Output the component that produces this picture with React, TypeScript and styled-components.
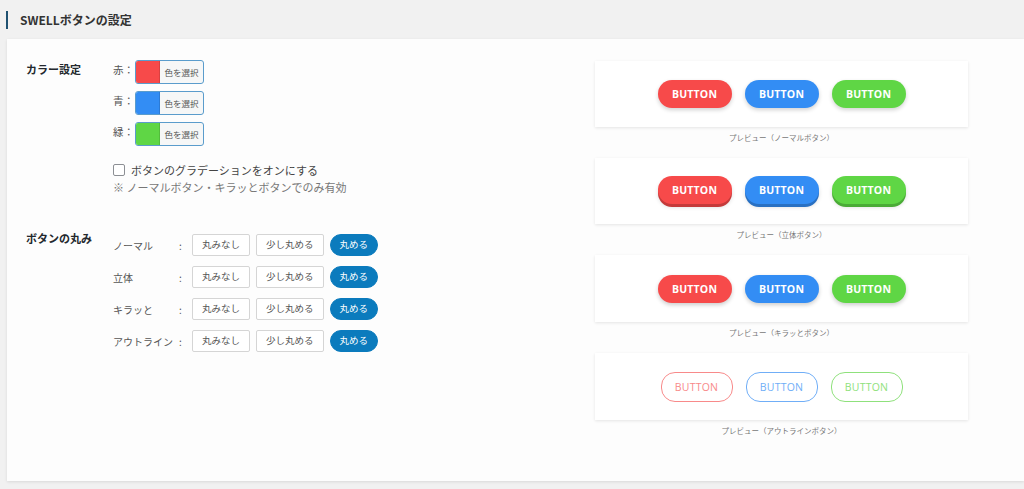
import React, { useState } from "react";
import styled, { createGlobalStyle, css } from "styled-components";

const GlobalStyle = createGlobalStyle`
    html, body {
        margin: 0;
        padding: 0;
        background: #f1f1f1;
        font-family: "Noto Sans CJK JP", "Noto Sans", sans-serif;
        color: #444;
    }
    * { box-sizing: border-box; }
`

const Page = styled.div`
    width: 1024px;
    height: 489px;
    overflow: hidden;
    display: flex;
    flex-direction: column;
`

const TitleBar = styled.div`
    height: 39px;
    display: flex;
    align-items: center;
    padding-left: 6px;
`

const TitleText = styled.h2`
    margin: 0;
    height: 18px;
    display: flex;
    align-items: center;
    border-left: 2px solid #1f5171;
    padding-left: 12px;
    font-size: 12px;
    font-weight: 700;
    color: #333;
    line-height: 1;
`

const Panel = styled.div`
    margin-left: 7px;
    height: 442px;
    background: #fdfdfd;
    box-shadow: 0 1px 3px rgba(0, 0, 0, 0.1);
    display: flex;
    padding: 22px 0 0 19px;
`

const LeftCol = styled.div`
    width: 569px;
    display: flex;
    flex-direction: column;
    gap: 35px;
    margin-top: -1px;
`

const Section = styled.div`
    display: grid;
    grid-template-columns: 87px 1fr;
    align-items: start;
`

const SectionTitle = styled.div`
    font-size: 11px;
    font-weight: 700;
    color: #23282d;
    line-height: 16px;
    padding-top: ${p => p.$offset}px;
`

const ColorList = styled.div`
    display: flex;
    flex-direction: column;
    gap: 7px;
`

const ColorRow = styled.div`
    display: flex;
    align-items: center;
    height: 24px;
`

const ColorLabel = styled.span`
    width: 22px;
    font-size: 10.5px;
    color: #555;
    margin-top: -6px;
`

const Picker = styled.button`
    display: flex;
    padding: 0;
    height: 24px;
    width: 69px;
    border: 1px solid #5a9ccc;
    border-radius: 3px;
    overflow: hidden;
    background: #f6f7f7;
    cursor: pointer;
    font-family: inherit;
`

const Swatch = styled.span`
    width: 24px;
    height: 100%;
    background: ${p => p.$color};
    border-right: 1px solid rgba(0, 0, 0, 0.12);
`

const PickerText = styled.span`
    flex: 1;
    display: flex;
    align-items: center;
    justify-content: center;
    font-size: 8.5px;
    color: #555;
`

const CheckRow = styled.label`
    display: flex;
    align-items: center;
    gap: 6px;
    margin-top: 16px;
    font-size: 11px;
    color: #444;
    line-height: 16px;
`

const CheckBox = styled.span`
    width: 12px;
    height: 12px;
    border: 1px solid #8c8f94;
    border-radius: 2px;
    background: #fff;
`

const Note = styled.div`
    font-size: 11px;
    color: #777;
    line-height: 16px;
    margin-top: 1px;
`

const RadiusList = styled.div`
    display: flex;
    flex-direction: column;
    gap: 10px;
    padding-top: 4px;
`

const RadiusRow = styled.div`
    display: flex;
    align-items: center;
    height: 22px;
`

const RowLabel = styled.span`
    width: 66px;
    font-size: 10px;
    color: #555;
`

const Colon = styled.span`
    width: 13px;
    font-size: 10px;
    color: #555;
`

const Options = styled.div`
    display: flex;
    gap: 6px;
`

const OptionBtn = styled.button`
    height: 22px;
    padding: 0 9px;
    font-family: inherit;
    font-size: 9.5px;
    line-height: 1;
    color: #555;
    background: #fff;
    border: 1px solid #d5d5d5;
    border-radius: 2px;
    cursor: pointer;
    ${p => p.$active && css`
        background: #0b7bbd;
        border-color: #0b7bbd;
        color: #fff;
        border-radius: 11px;
    `}
`

const RightCol = styled.div`
    width: 373px;
    display: flex;
    flex-direction: column;
    gap: 14px;
`

const PreviewItem = styled.div`
    display: flex;
    flex-direction: column;
`

const PreviewBox = styled.div`
    height: ${p => p.$h}px;
    background: #fff;
    box-shadow: 0 1px 3px rgba(0, 0, 0, 0.1);
    display: flex;
    align-items: center;
    justify-content: center;
    gap: 13px;
    padding-bottom: ${p => p.$pb}px;
`

const Caption = styled.div`
    margin-top: 5px;
    font-size: 7.5px;
    line-height: 12px;
    color: #777;
    text-align: center;
`

const SampleBtn = styled.span`
    width: 74px;
    height: 28px;
    border-radius: 14px;
    display: flex;
    align-items: center;
    justify-content: center;
    font-family: "Open Sans", "Noto Sans", sans-serif;
    font-size: 10.5px;
    font-weight: 700;
    letter-spacing: 0.2px;
    color: #fff;
    background: ${p => p.$color};
    ${p => p.$variant === "normal" && css`
        box-shadow: 0 2px 4px rgba(0, 0, 0, 0.18);
    `}
    ${p => p.$variant === "solid" && css`
        box-shadow: 0 3px 0 ${p.$dark}, 0 3px 4px rgba(0, 0, 0, 0.15);
    `}
    ${p => p.$variant === "shiny" && css`
        box-shadow: 0 2px 4px rgba(0, 0, 0, 0.2);
    `}
    ${p => p.$variant === "outline" && css`
        width: 72px;
        height: 30px;
        background: #fff;
        border: 1px solid ${p.$light};
        color: ${p.$light};
        font-weight: 400;
    `}
`

const colors = [
    { key: "red", label: "赤：", color: "#f74a4a", dark: "#c43a3a", light: "#f88a8a" },
    { key: "blue", label: "青：", color: "#338df4", dark: "#2970c2", light: "#70aef7" },
    { key: "green", label: "緑：", color: "#5fd645", dark: "#4aab36", light: "#8fe17c" },
];

const radiusRows = ["ノーマル", "立体", "キラッと", "アウトライン"];

const previews = [
    { variant: "normal", caption: "プレビュー（ノーマルボタン）", pb: 0, h: 66 },
    { variant: "solid", caption: "プレビュー（立体ボタン）", pb: 2, h: 66 },
    { variant: "shiny", caption: "プレビュー（キラッとボタン）", pb: 0, h: 67 },
    { variant: "outline", caption: "プレビュー（アウトラインボタン）", pb: 0, h: 67 },
];

export default function App() {
    const [radius, setRadius] = useState<Record<string, number>>({
        "ノーマル": 2, "立体": 2, "キラッと": 2, "アウトライン": 2,
    });

    return (
        <Page>
            <GlobalStyle />
            <TitleBar>
                <TitleText>SWELLボタンの設定</TitleText>
            </TitleBar>
            <Panel>
                <LeftCol>
                    <Section>
                        <SectionTitle $offset={1}>カラー設定</SectionTitle>
                        <div>
                            <ColorList>
                                {colors.map(c => (
                                    <ColorRow key={c.key}>
                                        <ColorLabel>{c.label}</ColorLabel>
                                        <Picker>
                                            <Swatch $color={c.color} />
                                            <PickerText>色を選択</PickerText>
                                        </Picker>
                                    </ColorRow>
                                ))}
                            </ColorList>
                            <CheckRow>
                                <CheckBox />
                                ボタンのグラデーションをオンにする
                            </CheckRow>
                            <Note>※ ノーマルボタン・キラッとボタンでのみ有効</Note>
                        </div>
                    </Section>
                    <Section>
                        <SectionTitle $offset={0}>ボタンの丸み</SectionTitle>
                        <RadiusList>
                            {radiusRows.map(r => (
                                <RadiusRow key={r}>
                                    <RowLabel>{r}</RowLabel>
                                    <Colon>:</Colon>
                                    <Options>
                                        {["丸みなし", "少し丸める", "丸める"].map((o, i) => (
                                            <OptionBtn
                                                key={o}
                                                $active={radius[r] === i}
                                                onClick={() => setRadius({ ...radius, [r]: i })}
                                            >
                                                {o}
                                            </OptionBtn>
                                        ))}
                                    </Options>
                                </RadiusRow>
                            ))}
                        </RadiusList>
                    </Section>
                </LeftCol>
                <RightCol>
                    {previews.map(p => (
                        <PreviewItem key={p.variant}>
                            <PreviewBox $pb={p.pb} $h={p.h}>
                                {colors.map(c => (
                                    <SampleBtn
                                        key={c.key}
                                        $variant={p.variant}
                                        $color={c.color}
                                        $dark={c.dark}
                                        $light={c.light}
                                    >
                                        BUTTON
                                    </SampleBtn>
                                ))}
                            </PreviewBox>
                            <Caption>{p.caption}</Caption>
                        </PreviewItem>
                    ))}
                </RightCol>
            </Panel>
        </Page>
    );
}
